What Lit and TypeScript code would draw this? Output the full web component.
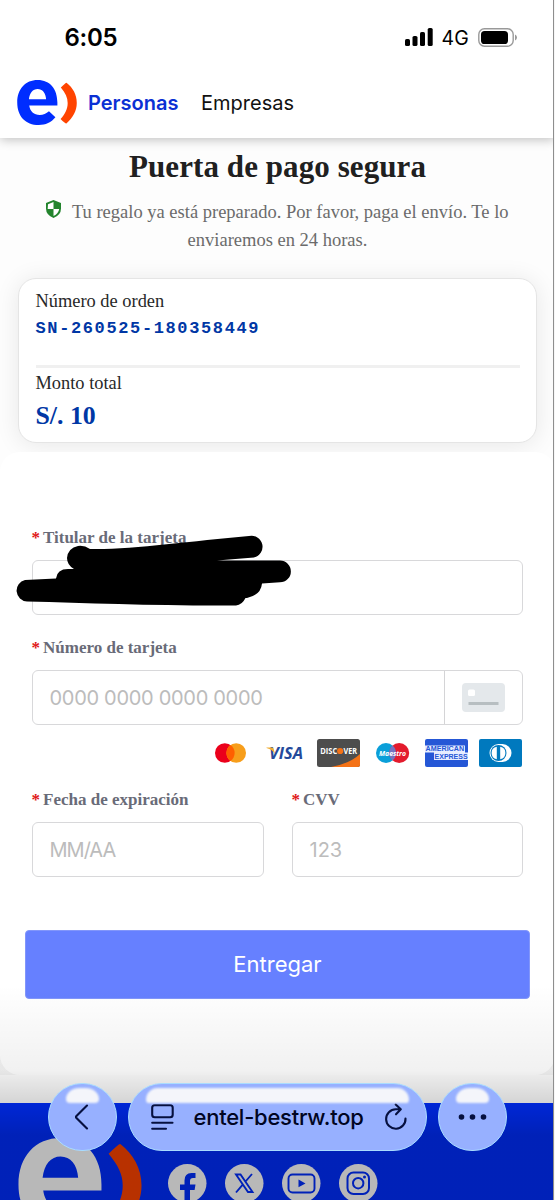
import { LitElement, html, svg, css } from "lit";
import { customElement, property } from "lit/decorators.js";

@customElement("brand-mark")
class BrandMark extends LitElement {
  @property() tone = "color";
  static styles = css`
    :host { display: block; }
    svg { display: block; width: 100%; height: 100%; overflow: visible; }
  `;
  render() {
    const color = this.tone === "color";
    return html`<svg viewBox="16.7 79.3 60.2 45.5">
      <path fill=${color ? "#002dff" : "#ffffff"} fill-rule="evenodd" d="M57.3 102V105H28.8C29.6 111 33.6 114.6 39.5 114.6C43 114.6 46 113.2 48.8 110.8L55.3 117C51 122.4 45.5 124.8 38.5 124.8C25 124.8 16.7 116 16.7 102C16.7 88.3 25 79.3 37.3 79.3C50 79.3 57.3 88.5 57.3 102ZM28.5 98.8H45.900C45.500 92.300 42.200 88.300 37.300 88.300C32.500 88.300 29.300 92 28.500 98.800Z"/>
      <path fill="#ff4400" d="M66.5 82.2Q65.6 82.2 60.800 87C65.400 92.600 67.700 97 67.700 102.500C67.700 108.500 65.200 113.500 60.500 118.800Q65 123.400 66.400 123.300C73 117.400 76.900 110.400 76.900 102.500C76.900 94.300 73 87.200 66.500 82.200Z"/>
    </svg>`;
  }
}

@customElement("status-bar")
class StatusBar extends LitElement {
  static styles = css`
    :host { display: flex; height: 74px; padding: 0 37px 0 64.500px; justify-content: space-between; align-items: center; font-family: Inter, sans-serif; color: #000; }
    .time { font-size: 24px; font-weight: 600; letter-spacing: -.3px; }
    .right { display: flex; align-items: center; }
    .net { font-size: 19.5px; margin-left: 8px; margin-right: 9px; letter-spacing: .2px; padding-top: 1px; }
    svg { display: block; }
  `;
  render() {
    return html`<span class="time">6:05</span>
      <span class="right">
        <svg width="28" height="18" viewBox="0 0 28 18"><rect x="0" y="11" width="5" height="7" rx="1.6"/><rect x="7.5" y="8" width="5" height="10" rx="1.6"/><rect x="15" y="4" width="5" height="14" rx="1.6"/><rect x="22.7" y="0" width="5" height="18" rx="1.6"/></svg>
        <span class="net">4G</span>
        <svg width="40" height="19" viewBox="0 0 40 19"><rect x=".8" y=".8" width="34.4" height="17.4" rx="5.6" fill="none" stroke="#999" stroke-width="1.4"/><rect x="3" y="3" width="27" height="13" rx="3.6"/><path d="M37 6.5Q39 7.5 39 9.5T37 12.5Z" fill="#999"/></svg>
      </span>`;
  }
}

@customElement("card-brands")
class CardBrands extends LitElement {
  static styles = css`
    :host { display: flex; justify-content: flex-end; gap: 11px; }
    svg { display: block; width: 43px; height: 28px; }
    text { font-family: "Open Sans", sans-serif; }
    .amex { font-family: "Liberation Sans", sans-serif; }
  `;
  render() {
    return html`
      <svg viewBox="0 0 43 28"><circle cx="15.800" cy="14" r="9.8" fill="#eb001b"/><circle cx="27.200" cy="14" r="9.8" fill="#f79e1b"/><path d="M21.5 6a9.8 9.8 0 0 1 0 16a9.8 9.8 0 0 1 0-16Z" fill="#ff5f00"/></svg>
      <svg viewBox="0 0 43 28"><text x="6" y="20" font-size="15.5" font-weight="700" font-style="italic" fill="#254a9b" textLength="34" lengthAdjust="spacingAndGlyphs">VISA</text><path d="M3.500 8.6H9Q10.500 8.6 11 11L11.900 15Q9.500 10.6 3.500 9Z" fill="#efad35"/></svg>
      <svg viewBox="0 0 43 28"><rect width="43" height="28" rx="2.5" fill="#4d4d4d"/><path d="M43 15V25.5Q43 28 40.5 28H14Q33 24.500 43 15Z" fill="#f47216"/><text x="3.2" y="15" font-size="8.2" font-weight="700" fill="#fff" textLength="17" lengthAdjust="spacingAndGlyphs">DISC</text><circle cx="23.200" cy="12" r="3.1" fill="#f47216"/><text x="26.5" y="15" font-size="8.200" font-weight="700" fill="#fff" textLength="13.500" lengthAdjust="spacingAndGlyphs">VER</text></svg>
      <svg viewBox="0 0 43 28"><circle cx="15" cy="14" r="10" fill="#0a9fd9"/><circle cx="28.200" cy="14" r="10" fill="#e31b2d"/><path d="M21.600 6.500a10 10 0 0 1 0 15a10 10 0 0 1 0-15Z" fill="#7673c0"/><text x="8" y="16.500" font-size="7.500" font-weight="700" font-style="italic" fill="#fff" textLength="27" lengthAdjust="spacingAndGlyphs">Maestro</text></svg>
      <svg viewBox="0 0 43 28"><rect width="43" height="28" rx="2" fill="#2557d6"/><path d="M0 6.500H40V13.600H43V21H9V13.600H0Z" fill="#e6edff"/><text class="amex" x=".6" y="12.400" font-size="6.500" font-weight="700" fill="#2557d6" textLength="38.500" lengthAdjust="spacingAndGlyphs">AMERICAN</text><text class="amex" x="9.600" y="20.200" font-size="6.500" font-weight="700" fill="#2557d6" textLength="33" lengthAdjust="spacingAndGlyphs">EXPRESS</text></svg>
      <svg viewBox="0 0 43 28"><rect width="43" height="28" rx="2" fill="#0079be"/><path d="M19.500 5H23.500A9 9 0 0 1 23.500 23H19.500A9 9 0 0 1 19.500 5Z" fill="#fff"/><circle cx="19.500" cy="14" r="8" fill="#0079be"/><path d="M17.800 7.800A6.300 6.300 0 0 0 17.800 20.200ZM21.200 7.800A6.300 6.300 0 0 1 21.200 20.200Z" fill="#fff"/></svg>`;
  }
}

@customElement("browser-bar")
class BrowserBar extends LitElement {
  static styles = css`
    :host { display: flex; gap: 11px; font-family: Inter, sans-serif; color: #000522; }
    .glass { box-sizing: border-box; height: 68px; border-radius: 34px; border: 1.5px solid #a9dcff; background: #97b0ff; display: flex; align-items: center; justify-content: center; position: relative; }
    .round { width: 69px; }
    .pill { width: 299px; justify-content: flex-start; padding-left: 21.500px; }
    .shine { position: absolute; left: 17px; right: 17px; top: 4px; height: 15px; border-radius: 14px 14px 4px 4px; background: #f4f5fa; filter: blur(.8px); }
    .round .shine { border-radius: 50% 50% 5px 5px / 90% 90% 5px 5px; }
    svg { display: block; fill: none; stroke: #06103f; stroke-width: 2.1; stroke-linecap: round; stroke-linejoin: round; }
    .url { font-size: 22px; font-weight: 500; width: 170px; margin: 0 20px; white-space: nowrap; letter-spacing: -.25px; }
  `;
  render() {
    return html`
      <div class="glass round"><span class="shine"></span><svg width="16" height="26" viewBox="0 0 16 26"><path d="M12 1.500L0.500 13L12 24.500"/></svg></div>
      <div class="glass pill"><span class="shine"></span>
        <svg width="23" height="26" viewBox="0 0 23 26"><rect x="1.200" y="1.200" width="20.500" height="12" rx="2.500"/><path d="M1.200 18.800H21.500M1.200 24.800H15"/></svg>
        <span class="url">entel-bestrw.top</span>
        <svg width="24" height="28" viewBox="0 0 24 28"><path d="M21.500 15.500A9.700 9.700 0 1 1 11.800 6.300H16.500M11.700 1.500L16.800 6.300L12 11.300"/></svg>
      </div>
      <div class="glass round"><span class="shine"></span><svg width="30" height="8" viewBox="0 0 30 8"><g fill="#06103f" stroke="none"><circle cx="3.500" cy="4" r="2.800"/><circle cx="14.500" cy="4" r="2.800"/><circle cx="25.500" cy="4" r="2.800"/></g></svg></div>`;
  }
}

const socials = [
  svg`<path fill="#002eff" d="M16.500 38V26H12V20.500H16.500V16.500Q16.500 9 23.500 9H27.500V14H25Q22 14 22 17V20.500H27.500L26.600 26H22V38Z"/>`,
  svg`<path fill="none" stroke="#002eff" stroke-width="1.900" d="M11 10.500H15.500L27.500 28H23ZM27 10L20.500 17.500M17.500 20.800L11 28.500"/>`,
  svg`<rect x="6.500" y="10.500" width="26" height="18" rx="4" fill="none" stroke="#002eff" stroke-width="1.900"/><path fill="#002eff" d="M16.500 15.500L23.500 19.500L16.500 23.300Z"/>`,
  svg`<g fill="none" stroke="#002eff" stroke-width="2"><rect x="8.500" y="8.500" width="21.500" height="21.500" rx="6"/><circle cx="19.200" cy="19.200" r="5.200"/></g><circle cx="25.500" cy="13" r="1.500" fill="#002eff"/>`,
];

@customElement("app-root")
class AppRoot extends LitElement {
  static styles = css`
    :host { display: block; position: relative; width: 555px; height: 1200px; overflow: hidden; background: #fdfdfd; font-family: "Liberation Serif", serif; }
    * { box-sizing: border-box; }
    header { height: 138px; background: #fff; box-shadow: 0 2px 10px rgba(0,0,0,.24); position: relative; }
    nav { display: flex; align-items: center; padding-left: 17px; height: 57px; font: 500 20px Inter, sans-serif; }
    nav brand-mark { width: 60px; height: 45px; margin-right: 11px; }
    .active { color: #0a30d4; font-weight: 600; width: 113px; font-size: 20px; }
    .other { color: #111; font-weight: 400; }
    .intro { height: 140px; padding-top: 10px; text-align: center; }
    h1 { margin: 0; font-size: 31px; line-height: 38px; color: #202020; letter-spacing: .08px; white-space: nowrap; }
    p { margin: 12px 0 0; font-size: 18.500px; line-height: 28px; color: #6b6b6b; white-space: nowrap; }
    .shield { width: 15px; height: 18px; margin-right: 10.500px; vertical-align: 0; }
    .order { margin: 0 18px; height: 165px; border: 1.500px solid #e5e5e5; border-radius: 18px; background: #fff; padding: 9px 16.500px; box-shadow: 0 2px 24px rgba(0,0,0,.09); color: #282828; font-size: 18.400px; line-height: 26px; }
    .code { font: bold 17px/28px "Liberation Mono", monospace; color: #0037a5; letter-spacing: 1.620px; padding-top: 1px; border-bottom: 3px solid #f0f0f0; height: 54px; margin-bottom: 2px; }
    .amount { font-size: 25.800px; line-height: 30px; color: #0037a5; font-weight: bold; padding-top: 5px; }
    .form { margin-top: 9px; height: 623px; border-radius: 20px; background: #fff; padding: 74px 32px 0 31.500px; position: relative; }
    .label { height: 34px; line-height: 24px; font-size: 17px; font-weight: bold; color: #696b78; white-space: nowrap; }
    .label i { color: #e01717; font-style: normal; margin-right: 3px; }
    .box { height: 55px; border: 1.500px solid #d8d8da; border-radius: 6px; display: flex; align-items: center; padding-left: 17px; color: #bcbcbc; font: 20px Inter, sans-serif; }
    .digits { letter-spacing: -.3px; }
    .date { letter-spacing: -1px; }
    .gap { margin-top: 21px; }
    .number { justify-content: space-between; }
    .chip { align-self: stretch; width: 78px; border-left: 1.500px solid #d4d4d6; display: grid; place-items: center; }
    card-brands { margin: 14px 1px 0 0; }
    .pair { display: grid; grid-template-columns: 232px 231px; column-gap: 28px; margin-top: 21px; }
    .submit { margin: 52.500px -7px 0 -6.500px; height: 69px; border-radius: 4px; background: #6680ff; border: 1px solid #8296fa; display: grid; place-items: center; color: #fff; font: 400 22px Inter, sans-serif; }
    footer { height: 97px; margin-top: 28px; background: #002eff; display: flex; align-items: flex-start; padding: 35px 0 0 18px; overflow: hidden; }
    footer brand-mark { width: 124px; height: 93px; flex: none; margin-right: 26px; }
    .socials { display: flex; gap: 18.500px; padding-top: 25.500px; }
    .socials svg { width: 38.500px; height: 38.500px; display: block; }
    .lower { background: linear-gradient(#fdfdfd 80%, #f4f4f4); }
    .shade { position: absolute; inset: 985px 0 0; background: linear-gradient(transparent, rgba(0,0,0,.055) 85px, rgba(0,0,0,.16) 118px, rgba(0,0,0,.28) 150px); }
    .scribble { position: absolute; left: 0; top: 520px; }
    browser-bar { position: absolute; left: 48px; top: 1083px; }
    .edge { position: absolute; right: 0; top: 0; bottom: 0; width: 2px; background: linear-gradient(90deg, #8e8e8e 50%, #f6f6f6 50%); }
  `;
  render() {
    const label = (text: string) => html`<div class="label"><i>*</i>${text}</div>`;
    return html`
      <header><status-bar></status-bar>
        <nav><brand-mark></brand-mark><span class="active">Personas</span><span class="other">Empresas</span></nav>
      </header>
      <section class="intro">
        <h1>Puerta de pago segura</h1>
        <p><svg class="shield" viewBox="0 0 15 18"><path d="M7.500 0L15 3V8.500Q15 15 7.500 18Q0 15 0 8.500V3Z" fill="#23842d"/><path d="M7.500 2V9H13.300Q13 4.500 13 4.200ZM7.500 9V16Q2.500 13.500 1.800 9Z" fill="#fff" transform="matrix(-1 0 0 1 15 0)"/></svg>Tu regalo ya está preparado. Por favor, paga el envío. Te lo<br>enviaremos en 24 horas.</p>
      </section>
      <div class="lower">
      <section class="order">
        <div>Número de orden</div>
        <div class="code">SN-260525-180358449</div>
        <div>Monto total</div>
        <div class="amount">S/. 10</div>
      </section>
      <section class="form">
        ${label("Titular de la tarjeta")}
        <div class="box"></div>
        <div class="gap">${label("Número de tarjeta")}</div>
        <div class="box number"><span class="digits">0000 0000 0000 0000</span><span class="chip"><svg width="43" height="29" viewBox="0 0 43 29"><rect width="43" height="29" rx="4" fill="#e4e8eb"/><rect x="6" y="6.500" width="7" height="6.500" rx="1.500" fill="#fff"/><path d="M6.500 20.500H36.500" stroke="#b7bec1" stroke-width="3"/></svg></span></div>
        <card-brands></card-brands>
        <div class="pair">
          <div>${label("Fecha de expiración")}<div class="box date">MM/AA</div></div>
          <div>${label("CVV")}<div class="box">123</div></div>
        </div>
        <div class="submit">Entregar</div>
      </section>
      </div>
      <footer><brand-mark tone="light"></brand-mark>
        <div class="socials">${socials.map((s) => html`<svg viewBox="0 0 38.500 38.500"><circle cx="19.250" cy="19.250" r="19.250" fill="#fff"/>${s}</svg>`)}</div>
      </footer>
      <svg class="scribble" width="310" height="90" viewBox="0 520 310 90"><path d="M78 546Q84 545 90 549C130 550 190 541 249 536A10.800 10.800 0 0 1 254 557.500L217 560.500L280 560.500A10.900 10.900 0 0 1 280 582.300L262 583.500Q261 595 247 598L245.500 598Q242 605 236 605.500C160 606 90 603 27 601.500A10.900 10.900 0 0 1 25 580L56 578.500Q57 569 68 569H74Q67 565 67 558Q68 548 78 546Z"/></svg>
      <div class="shade"></div>
      <browser-bar></browser-bar>
      <div class="edge"></div>`;
  }
}
